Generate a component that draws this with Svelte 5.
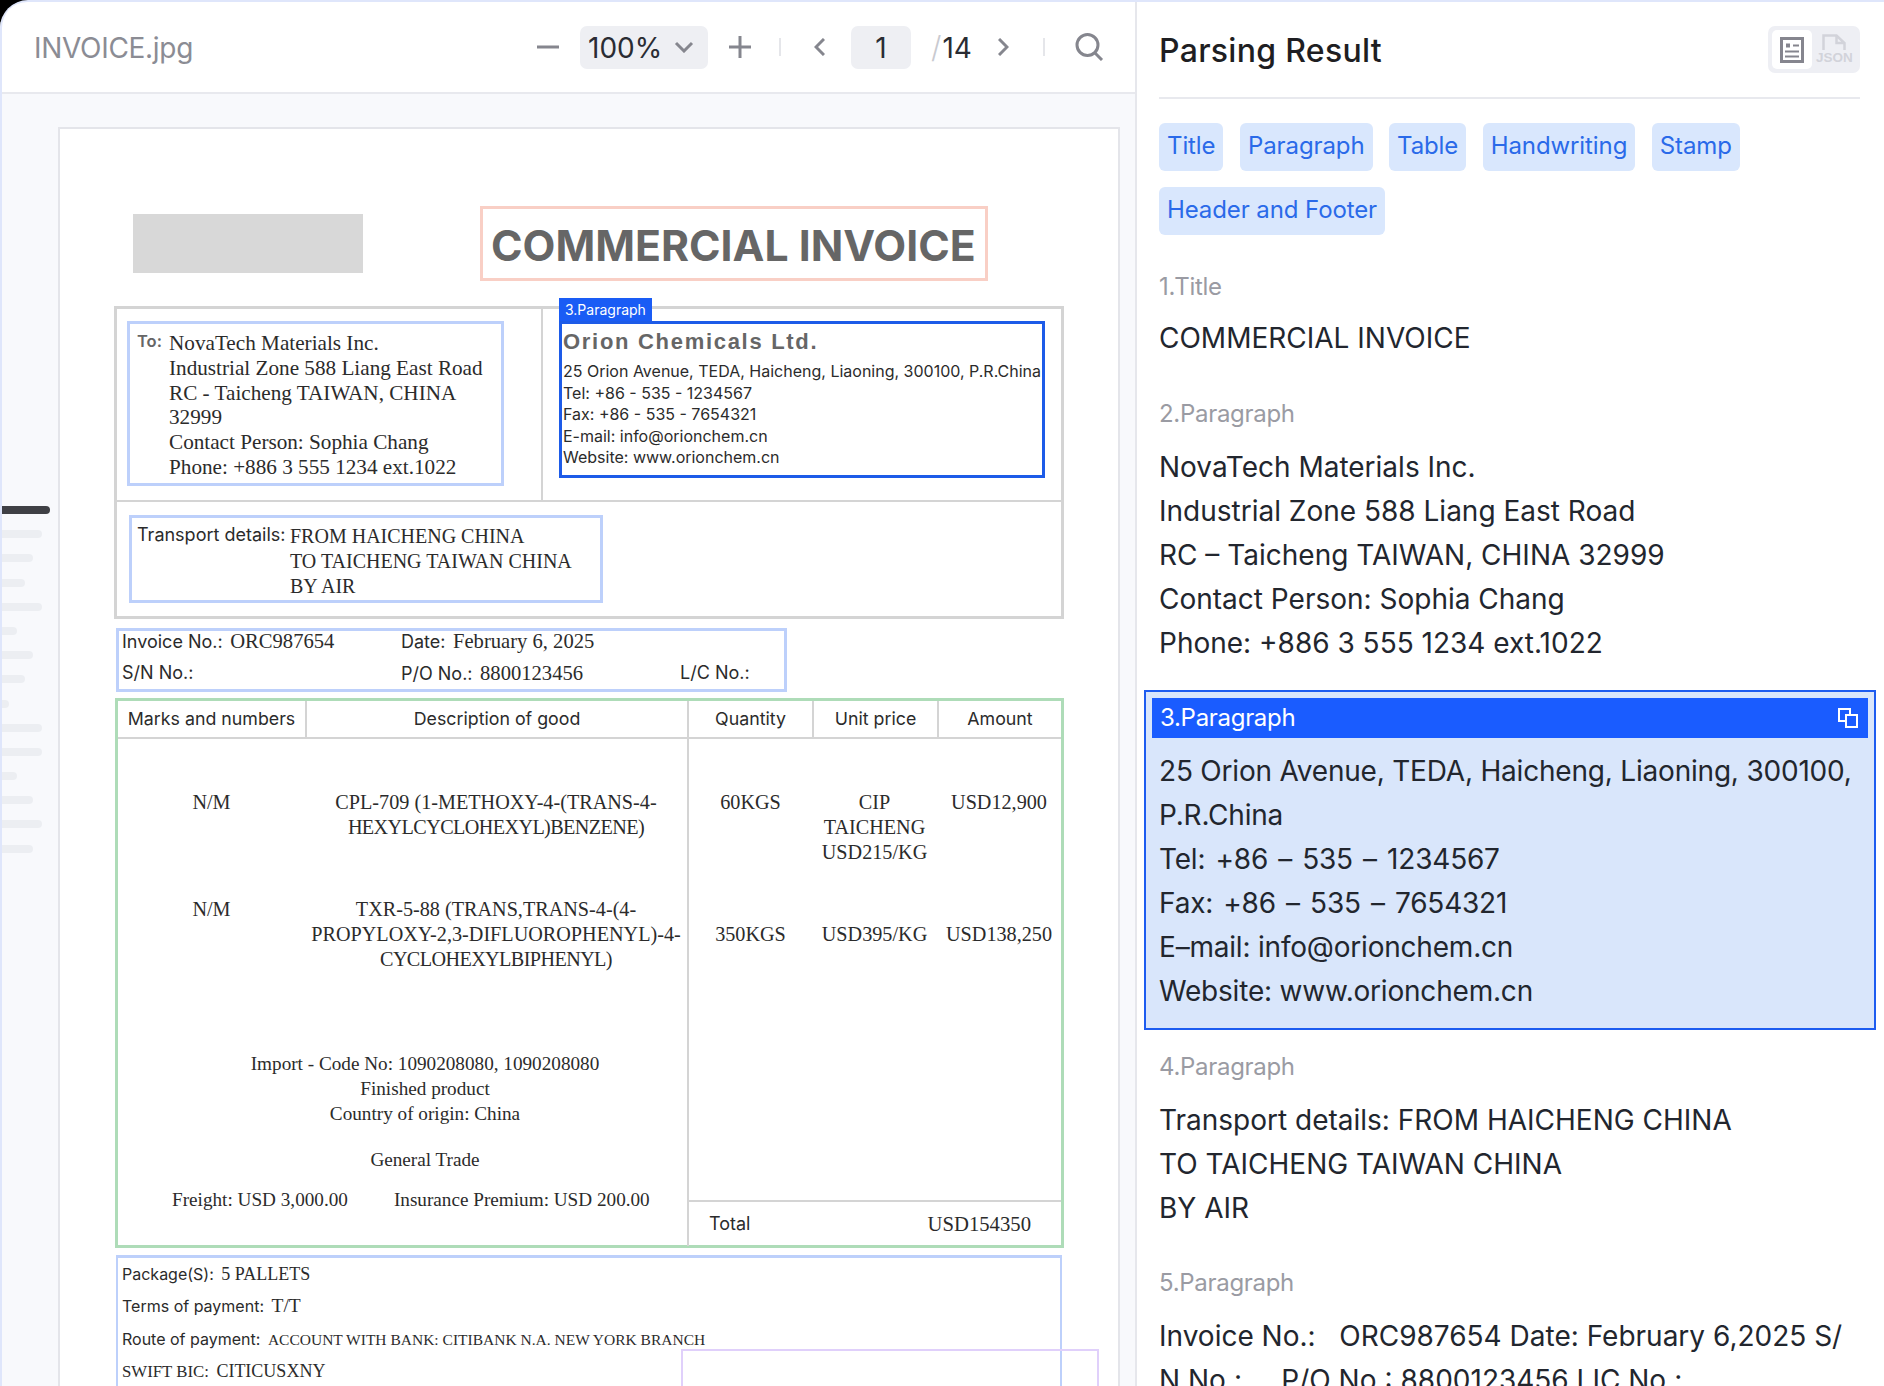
<script>
  const thumbs = [40, 31, 23, 40, 15, 31, 23, 7, 40, 40, 15, 31, 40, 31];
  const tags = ["Title", "Paragraph", "Table", "Handwriting", "Stamp", "Header and Footer"];
</script>

<div class="app">
  <section class="viewer">
    <header class="toolbar">
      <span class="filename">INVOICE.jpg</span>
      <svg class="ico minus" width="22" height="4" viewBox="0 0 22 4"><path d="M0 2h22" /></svg>
      <div class="zoom-select">
        <span>100%</span>
        <svg class="ico" width="20" height="12" viewBox="0 0 20 12"><path d="M2 2l8 8 8-8" /></svg>
      </div>
      <svg class="ico plus" width="22" height="22" viewBox="0 0 22 22"><path d="M0 11h22M11 0v22" /></svg>
      <i class="sep first"></i>
      <svg class="ico prev" width="11" height="18" viewBox="0 0 11 18"><path d="M10 1L2 9l8 8" /></svg>
      <div class="page-input">1</div>
      <span class="slash">/</span>
      <span class="total-pages">14</span>
      <svg class="ico next" width="11" height="18" viewBox="0 0 11 18"><path d="M1 1l8 8-8 8" /></svg>
      <i class="sep second"></i>
      <svg class="ico search" width="29" height="28" viewBox="0 0 29 28">
        <circle cx="12.5" cy="12" r="10.5" />
        <path d="M20 20l7 7" />
      </svg>
    </header>

    <div class="stage">
      <div class="thumbs">
        <i class="dark"></i>
        {#each thumbs as w}
          <i style="width: {w}px"></i>
        {/each}
      </div>

      <div class="page">
        <div class="doc-head">
          <div class="logo"></div>
          <div class="doc-title">COMMERCIAL INVOICE</div>
        </div>

        <div class="party">
          <div class="party-top">
            <div class="party-left">
              <div class="mark to">
                <span class="lbl to-lbl">To:</span>
                <div class="serif">
                  NovaTech Materials Inc.<br />
                  Industrial Zone 588 Liang East Road<br />
                  RC - Taicheng TAIWAN, CHINA<br />
                  32999<br />
                  Contact Person: Sophia Chang<br />
                  Phone: +886 3 555 1234 ext.1022
                </div>
              </div>
            </div>
            <div class="party-right">
              <div class="mark-active">
                <span class="mark-tag">3.Paragraph</span>
                <div class="orion">Orion Chemicals Ltd.</div>
                <div class="orion-lines">
                  25 Orion Avenue, TEDA, Haicheng, Liaoning, 300100, P.R.China<br />
                  Tel: +86 - 535 - 1234567<br />
                  Fax: +86 - 535 - 7654321<br />
                  E-mail: info@orionchem.cn<br />
                  Website: www.orionchem.cn
                </div>
              </div>
            </div>
          </div>
          <div class="party-bottom">
            <div class="mark transport">
              <span class="lbl">Transport details:</span>
              <div class="serif">
                FROM HAICHENG CHINA<br />
                TO TAICHENG TAIWAN CHINA<br />
                BY AIR
              </div>
            </div>
          </div>
        </div>

        <div class="mark info">
          <div><span class="lbl">Invoice No.:</span> <span class="serif">ORC987654</span></div>
          <div><span class="lbl">Date:</span> <span class="serif">February 6, 2025</span></div>
          <div></div>
          <div><span class="lbl">S/N No.:</span></div>
          <div><span class="lbl">P/O No.:</span> <span class="serif">8800123456</span></div>
          <div><span class="lbl">L/C No.:</span></div>
        </div>

        <div class="goods">
          <div class="row head">
            <div>Marks and numbers</div>
            <div class="line">Description of good</div>
            <div class="line">Quantity</div>
            <div class="line">Unit price</div>
            <div class="line">Amount</div>
          </div>
          <div class="row r1 serif">
            <div>N/M</div>
            <div>CPL-709 (1-METHOXY-4-(TRANS-4-<br /><span class="tight">HEXYLCYCLOHEXYL)BENZENE)</span></div>
            <div class="line">60KGS</div>
            <div>CIP<br />TAICHENG<br />USD215/KG</div>
            <div>USD12,900</div>
          </div>
          <div class="row r2 serif">
            <div>N/M</div>
            <div>TXR-5-88 (TRANS,TRANS-4-(4-<br />PROPYLOXY-2,3-DIFLUOROPHENYL)-4-<br /><span class="tight">CYCLOHEXYLBIPHENYL)</span></div>
            <div class="line mid">350KGS</div>
            <div class="mid">USD395/KG</div>
            <div class="mid">USD138,250</div>
          </div>
          <div class="row r3">
            <div class="notes serif">
              <p>Import - Code No: 1090208080, 1090208080</p>
              <p>Finished product</p>
              <p>Country of origin: China</p>
              <p class="trade">General Trade</p>
              <p class="costs"><span>Freight: USD 3,000.00</span><span>Insurance Premium: USD 200.00</span></p>
            </div>
            <div class="totals line">
              <div class="total-row">
                <span class="lbl">Total</span>
                <span class="serif">USD154350</span>
              </div>
            </div>
          </div>
        </div>

        <div class="terms">
          <div><span class="lbl">Package(S):</span> <span class="serif">5 PALLETS</span></div>
          <div><span class="lbl">Terms of payment:</span> <span class="serif tt">T/T</span></div>
          <div><span class="lbl">Route of payment:</span> <span class="serif small">ACCOUNT WITH BANK: CITIBANK N.A. NEW YORK BRANCH</span></div>
          <div><span class="swift">SWIFT BIC:</span> <span class="serif">CITICUSXNY</span></div>
        </div>

        <div class="stamp-mark"></div>
      </div>
    </div>
  </section>

  <aside class="result">
    <header class="result-head">
      <h1>Parsing Result</h1>
      <div class="switch">
        <div class="switch-on">
          <svg width="24" height="26" viewBox="0 0 24 26" fill="none" stroke="#85858e" stroke-width="3">
            <rect x="1.5" y="1.5" width="21" height="23" />
            <path d="M6 6.5h4v4H6z" fill="#85858e" stroke="none" />
            <path d="M13 8.5h6M5 14.5h14M5 19.5h14" stroke-width="2" />
          </svg>
        </div>
        <div class="switch-off">
          <svg width="24" height="16" viewBox="0 0 24 16" fill="none" stroke="#d2d3da" stroke-width="2.5">
            <path d="M1.5 16V1.5h13L22.5 9v7M14.5 1.5V9h8" />
          </svg>
          <span>JSON</span>
        </div>
      </div>
    </header>

    <div class="tags">
      {#each tags as tag}
        <span class="tag">{tag}</span>
      {/each}
    </div>

    <div class="block first-block">
      <div class="block-label">1.Title</div>
      <p>COMMERCIAL INVOICE</p>
    </div>

    <div class="block second-block">
      <div class="block-label">2.Paragraph</div>
      <p>NovaTech Materials Inc.</p>
      <p>Industrial Zone 588 Liang East Road</p>
      <p>RC – Taicheng TAIWAN, CHINA 32999</p>
      <p>Contact Person: Sophia Chang</p>
      <p>Phone: +886 3 555 1234 ext.1022</p>
    </div>

    <div class="block-active">
      <div class="active-bar">
        <span>3.Paragraph</span>
        <svg width="20" height="20" viewBox="0 0 20 20" fill="none" stroke="#fff" stroke-width="2">
          <path d="M9 13H1V1h11v6" />
          <rect x="8" y="7" width="11" height="12" fill="#1a5cff" />
        </svg>
      </div>
      <div class="active-text">
        <p>25 Orion Avenue, TEDA, Haicheng, Liaoning, 300100, P.R.China</p>
        <p class="dash">Tel: +86 – 535 – 1234567</p>
        <p class="dash">Fax: +86 – 535 – 7654321</p>
        <p>E–mail: info@orionchem.cn</p>
        <p>Website: www.orionchem.cn</p>
      </div>
    </div>

    <div class="block after-active">
      <div class="block-label">4.Paragraph</div>
      <p>Transport details: FROM HAICHENG CHINA</p>
      <p>TO TAICHENG TAIWAN CHINA</p>
      <p>BY AIR</p>
    </div>

    <div class="block">
      <div class="block-label">5.Paragraph</div>
      <p class="keep">Invoice No.:   ORC987654 Date: February 6,2025 S/</p>
      <p class="keep">N No.:     P/O No.: 8800123456 LIC No.:</p>
    </div>
  </aside>
</div>

<style>
  :global(body) {
    margin: 0;
    background: #000;
  }

  .app {
    width: 1884px;
    height: 1386px;
    display: flex;
    overflow: hidden;
    box-sizing: border-box;
    background: #fff;
    border-top: 2px solid #dfe6fb;
    border-top-left-radius: 28px;
    font-family: Inter, "Liberation Sans", sans-serif;
  }

  /* left side */
  .viewer {
    width: 1137px;
    flex: none;
    display: flex;
    flex-direction: column;
    box-sizing: border-box;
    border-left: 2px solid #dfe6fb;
    border-right: 2px solid #e6e7ec;
    border-top-left-radius: 26px;
  }

  .toolbar {
    height: 90px;
    flex: none;
    display: flex;
    align-items: center;
    border-bottom: 2px solid #e8e9ee;
  }

  .filename {
    margin-left: 32px;
    width: 503px;
    font-size: 28px;
    line-height: 36px;
    padding-top: 2px;
    color: #8b8c94;
    letter-spacing: -0.3px;
  }

  .ico {
    flex: none;
    fill: none;
    stroke: #85868e;
    stroke-width: 3;
  }

  .minus {
    margin-right: 21px;
  }

  .zoom-select {
    width: 128px;
    height: 43px;
    display: flex;
    align-items: center;
    gap: 12px;
    padding-left: 8px;
    box-sizing: border-box;
    background: #eeeff3;
    border-radius: 7px;
    font-size: 28px;
    color: #2a2c33;
  }

  .zoom-select span,
  .page-input,
  .total-pages {
    padding-top: 2px;
  }

  .plus {
    margin-left: 21px;
  }

  .sep {
    width: 2px;
    height: 18px;
    background: #e5e6ea;
    flex: none;
  }

  .sep.first {
    margin-left: 28px;
  }

  .prev {
    margin-left: 33px;
  }

  .page-input {
    width: 60px;
    height: 43px;
    margin-left: 26px;
    display: flex;
    align-items: center;
    justify-content: center;
    box-sizing: border-box;
    background: #eeeff3;
    border-radius: 7px;
    font-size: 28px;
    color: #2a2c33;
  }

  .slash {
    margin-left: 20px;
    font-size: 30px;
    color: #c9cad0;
    font-weight: 300;
  }

  .total-pages {
    margin-left: 1px;
    font-size: 28px;
    color: #2a2c33;
  }

  .next {
    margin-left: 26px;
  }

  .sep.second {
    margin-left: 34px;
  }

  .search {
    margin-left: 30px;
  }

  .stage {
    flex: 1;
    min-height: 0;
    display: flex;
    background: #f8f9fc;
    overflow: hidden;
  }

  .thumbs {
    width: 56px;
    flex: none;
    display: flex;
    flex-direction: column;
    gap: 16.2px;
    padding-top: 412px;
    box-sizing: border-box;
  }

  .thumbs i {
    display: block;
    height: 8px;
    background: #eceef2;
    border-radius: 0 4px 4px 0;
  }

  .thumbs .dark {
    width: 48px;
    background: #3f4045;
  }

  .page {
    position: relative;
    width: 1062px;
    height: 1400px;
    flex: none;
    margin-top: 33px;
    box-sizing: border-box;
    background: #fff;
    border: 2px solid #e4e5ea;
    color: #2b2b2b;
  }

  .serif {
    font-family: "Liberation Serif", serif;
    font-size: 20px;
    line-height: 24.8px;
  }

  .lbl {
    font-family: Inter, "Liberation Sans", sans-serif;
    font-size: 18px;
    line-height: 24.7px;
  }

  .doc-head {
    display: flex;
    align-items: center;
    height: 75px;
    margin: 77px 0 0 73px;
  }

  .logo {
    width: 230px;
    height: 59px;
    background: #d8d8d8;
  }

  .doc-title {
    width: 508px;
    height: 75px;
    margin-left: 117px;
    box-sizing: border-box;
    border: 3px solid #f9cfc5;
    padding-left: 8px;
    font-size: 42.7px;
    font-weight: 700;
    line-height: 74px;
    color: #666;
    white-space: nowrap;
  }

  .party {
    width: 950px;
    height: 313px;
    margin: 25px 0 0 54px;
    box-sizing: border-box;
    border: 3px solid #d4d4d4;
  }

  .party-top {
    display: flex;
    height: 191px;
    border-bottom: 2px solid #d4d4d4;
  }

  .party-left {
    width: 424px;
    flex: none;
    border-right: 2px solid #d4d4d4;
  }

  .mark {
    box-sizing: border-box;
    border: 3px solid #bdd0fb;
  }

  .to {
    display: flex;
    width: 377px;
    height: 165px;
    margin: 12px 0 0 10px;
    padding: 7px 0 0 7px;
  }

  .to .serif {
    font-size: 21.2px;
  }

  .to-lbl {
    width: 32px;
    flex: none;
    font-size: 16.5px;
    font-weight: 600;
    color: #666;
    line-height: 20px;
  }

  .party-right {
    flex: 1;
  }

  .mark-active {
    position: relative;
    width: 486px;
    height: 157px;
    margin: 12px 0 0 16px;
    box-sizing: border-box;
    border: 3px solid #1d5be8;
    padding: 4px 0 0 1px;
  }

  .mark-tag {
    position: absolute;
    left: -3px;
    top: -26px;
    width: 93px;
    height: 23px;
    box-sizing: border-box;
    padding-left: 6px;
    background: #1a5cf5;
    color: #fff;
    font-size: 14px;
    line-height: 23px;
  }

  .orion {
    font-size: 22px;
    font-weight: 700;
    line-height: 28px;
    letter-spacing: 1.7px;
    color: #666;
    font-family: "Liberation Sans", sans-serif;
  }

  .orion-lines {
    margin-top: 5px;
    font-size: 16px;
    line-height: 21.6px;
    white-space: nowrap;
  }

  .transport {
    display: flex;
    width: 474px;
    height: 88px;
    margin: 13px 0 0 12px;
    padding: 7px 0 0 5px;
  }

  .transport .lbl {
    width: 153px;
    flex: none;
    line-height: 20px;
  }

  .transport .serif {
    margin-top: -1px;
  }

  .info {
    display: grid;
    grid-template-columns: 279px 279px 1fr;
    grid-auto-rows: 20px;
    row-gap: 12px;
    width: 671px;
    height: 64px;
    margin: 9px 0 0 56px;
    padding-left: 3px;
    white-space: nowrap;
  }

  .info .lbl {
    line-height: 20px;
  }

  .info .serif {
    font-size: 20.6px;
    line-height: 20px;
    margin-left: 3px;
  }

  .goods {
    width: 949px;
    height: 550px;
    margin: 6px 0 0 55px;
    box-sizing: border-box;
    border: 3px solid #aedcb8;
  }

  .goods .row {
    font-size: 20.2px;
  }

  .row {
    display: grid;
    grid-template-columns: 187px 382px 125px 125px 124px;
    text-align: center;
  }

  .line {
    border-left: 2px solid #d4d4d4;
    box-sizing: border-box;
  }

  .tight {
    letter-spacing: -0.6px;
  }

  .goods .head {
    height: 38px;
    box-sizing: border-box;
    border-bottom: 2px solid #d4d4d4;
    font-size: 17.8px;
    line-height: 36px;
  }

  .r1 {
    height: 145px;
  }

  .r1 > div {
    padding-top: 51px;
  }

  .r2 {
    height: 150px;
  }

  .r2 > div {
    padding-top: 13px;
    height: 87px;
    box-sizing: border-box;
  }

  .r2 .line {
    height: 150px;
  }

  .r2 > .mid {
    padding-top: 38px;
  }

  .goods .r3 {
    height: 212px;
  }

  .notes {
    grid-column: span 2;
    padding: 18px 0 0 45px;
    font-size: 19.2px;
  }

  .notes p {
    margin: 0;
  }

  .trade {
    padding-top: 22px;
  }

  .costs {
    display: flex;
    padding: 15px 0 0 9px;
    gap: 46px;
    text-align: left;
  }

  .totals {
    grid-column: span 3;
    display: flex;
    align-items: flex-end;
  }

  .total-row {
    flex: 1;
    height: 44px;
    display: flex;
    align-items: center;
    justify-content: space-between;
    padding: 0 30px 0 20px;
    border-top: 2px solid #d4d4d4;
  }

  .total-row .serif {
    font-size: 20.7px;
  }

  .terms {
    width: 946px;
    height: 220px;
    margin: 7px 0 0 56px;
    box-sizing: border-box;
    border: 2px solid #bdd0fb;
    border-top-width: 3px;
    padding-left: 4px;
  }

  .terms > div {
    height: 32.3px;
    line-height: 32.3px;
    white-space: nowrap;
  }

  .terms .lbl {
    font-size: 16px;
  }

  .terms .serif {
    font-size: 18px;
    margin-left: 3px;
  }

  .terms .tt {
    font-size: 19.5px;
  }

  .terms .small {
    font-size: 15.5px;
  }

  .swift {
    font-family: "Liberation Serif", serif;
    font-size: 16.8px;
  }

  .stamp-mark {
    position: absolute;
    left: 621px;
    top: 1220px;
    width: 418px;
    height: 150px;
    box-sizing: border-box;
    border: 2px solid #e0d0fb;
  }

  /* right side */
  .result {
    flex: 1;
    min-width: 0;
    padding: 0 24px 0 22px;
    box-sizing: border-box;
    color: #22262e;
    font-size: 28px;
    line-height: 44px;
  }

  .result p {
    margin: 0;
  }

  .result-head {
    height: 95px;
    display: flex;
    justify-content: space-between;
    align-items: flex-start;
    border-bottom: 2px solid #e8e9ee;
  }

  h1 {
    margin: 28px 0 0;
    font-size: 32px;
    font-weight: 500;
    line-height: 42px;
    letter-spacing: 0.3px;
    color: #1e1e22;
  }

  .switch {
    display: flex;
    align-items: center;
    width: 92px;
    height: 47px;
    margin-top: 24px;
    padding: 4px;
    box-sizing: border-box;
    background: #eeeff4;
    border-radius: 7px;
  }

  .switch-on {
    width: 40px;
    height: 39px;
    display: flex;
    align-items: center;
    justify-content: center;
    background: #fff;
    border-radius: 5px;
  }

  .switch-off {
    width: 44px;
    display: flex;
    flex-direction: column;
    align-items: center;
    margin-left: 1px;
  }

  .switch-off span {
    font-family: "Liberation Sans", sans-serif;
    font-size: 13.5px;
    line-height: 15px;
    font-weight: 700;
    color: #d2d3da;
  }

  .tags {
    display: flex;
    flex-wrap: wrap;
    gap: 16px 16.5px;
    margin-top: 24px;
  }

  .tag {
    height: 48px;
    padding: 0 8px;
    background: #d9e7fd;
    border-radius: 6px;
    color: #2a6ae9;
    font-size: 24px;
    letter-spacing: -0.1px;
    line-height: 46px;
  }

  .block {
    margin-top: 31px;
  }

  .first-block {
    margin-top: 30px;
  }

  .second-block {
    margin-top: 32px;
  }

  .result .first-block p {
    margin-top: -2px;
  }

  .after-active {
    margin-top: 15px;
  }

  .block-label {
    margin-bottom: 9px;
    color: #9a9ba3;
    font-size: 24px;
    letter-spacing: -0.3px;
  }

  .block-active {
    width: 732px;
    height: 340px;
    margin: 25px 0 0 -15px;
    box-sizing: border-box;
    border: 2px solid #1d5cf0;
    padding: 6px 6px 0;
    background: #d9e6fb;
  }

  .active-bar {
    height: 40px;
    display: flex;
    align-items: center;
    justify-content: space-between;
    padding: 0 10px 0 8px;
    background: #1a5cff;
    color: #fff;
    font-size: 24px;
    letter-spacing: -0.3px;
  }

  .active-text {
    margin-top: 11px;
    padding-left: 7px;
    letter-spacing: -0.2px;
  }

  .dash {
    word-spacing: 2.5px;
  }

  .keep {
    white-space: pre;
  }
</style>
